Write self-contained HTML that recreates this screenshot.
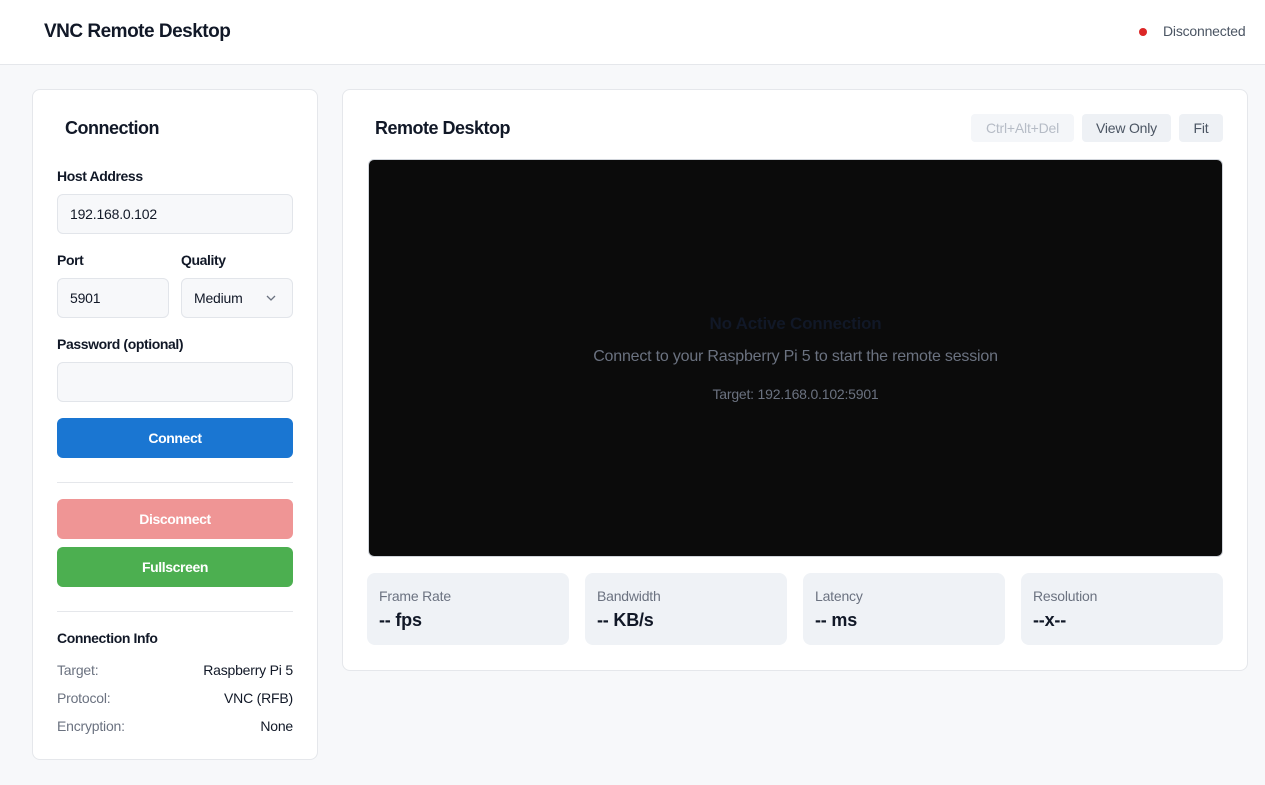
<!DOCTYPE html>
<html><head><style>
*{box-sizing:border-box;margin:0;padding:0}
body{width:1265px;height:785px;background:#f7f8fa;font-family:"Liberation Sans",sans-serif;color:#111827;position:relative;overflow:hidden;letter-spacing:-0.2px}
.hdr{position:absolute;left:0;top:0;width:1265px;height:65px;background:#fff;border-bottom:1px solid #e5e7eb}
.abs{position:absolute}
.card{position:absolute;background:#fff;border:1px solid #e5e7eb;border-radius:8px}
.lbl{position:absolute;font-size:14px;font-weight:bold;color:#111827;letter-spacing:-0.4px}
.inp{position:absolute;background:#f7f8fa;border:1px solid #e2e5ea;border-radius:6px;font-size:14px;padding-left:12px;line-height:38px;height:40px}
.btn{position:absolute;left:57px;width:236px;height:40px;border-radius:6px;color:#fff;font-size:14px;font-weight:bold;text-align:center;line-height:40px;letter-spacing:-0.4px}
.info{position:absolute;left:57px;width:236px;font-size:14px;color:#6b7280;display:flex;justify-content:space-between}
.info b{font-weight:normal;color:#111827}
.tb{position:absolute;top:114px;height:28px;border-radius:4px;background:#eef1f5;font-size:14px;color:#4b5563;line-height:28px;text-align:center}
.stat{position:absolute;top:573px;width:202px;height:72px;background:#eff2f6;border-radius:8px;padding:15px 12px}
.stat div{font-size:14px;color:#6b7280}
.stat p{font-size:18px;font-weight:bold;margin-top:6px}
</style></head><body>
<div class="hdr"></div>
<div class="abs" style="left:44px;top:21px;font-size:19px;font-weight:bold;letter-spacing:-0.5px">VNC Remote Desktop</div>
<div class="abs" style="left:1139px;top:28px;width:8px;height:8px;border-radius:50%;background:#dc2626"></div>
<div class="abs" style="left:1163px;top:23px;font-size:14px;color:#4b5563">Disconnected</div>

<div class="card" style="left:32px;top:89px;width:286px;height:671px"></div>
<div class="abs" style="left:65px;top:118px;font-size:18px;font-weight:bold;letter-spacing:-0.5px">Connection</div>
<div class="lbl" style="left:57px;top:168px">Host Address</div>
<div class="inp" style="left:57px;top:194px;width:236px">192.168.0.102</div>
<div class="lbl" style="left:57px;top:252px">Port</div>
<div class="lbl" style="left:181px;top:252px">Quality</div>
<div class="inp" style="left:57px;top:278px;width:112px">5901</div>
<div class="inp" style="left:181px;top:278px;width:112px">Medium<svg style="position:absolute;right:16px;top:16px" width="10" height="6" viewBox="0 0 10 6"><path d="M1 1l4 4 4-4" fill="none" stroke="#6b7280" stroke-width="1.3"/></svg></div>
<div class="lbl" style="left:57px;top:336px">Password (optional)</div>
<div class="inp" style="left:57px;top:362px;width:236px"></div>
<div class="btn" style="top:418px;background:#1a76d2">Connect</div>
<div class="abs" style="left:57px;top:482px;width:236px;height:1px;background:#e5e7eb"></div>
<div class="btn" style="top:499px;background:#ef9595">Disconnect</div>
<div class="btn" style="top:547px;background:#4caf50">Fullscreen</div>
<div class="abs" style="left:57px;top:611px;width:236px;height:1px;background:#e5e7eb"></div>
<div class="lbl" style="left:57px;top:630px">Connection Info</div>
<div class="info" style="top:662px"><span>Target:</span><b>Raspberry Pi 5</b></div>
<div class="info" style="top:690px"><span>Protocol:</span><b>VNC (RFB)</b></div>
<div class="info" style="top:718px"><span>Encryption:</span><b>None</b></div>

<div class="card" style="left:342px;top:89px;width:906px;height:582px"></div>
<div class="abs" style="left:375px;top:118px;font-size:18px;font-weight:bold;letter-spacing:-0.5px">Remote Desktop</div>
<div class="tb" style="left:971px;width:103px;background:#f4f6f9;color:#b6bcc6">Ctrl+Alt+Del</div>
<div class="tb" style="left:1082px;width:89px">View Only</div>
<div class="tb" style="left:1179px;width:44px">Fit</div>
<div class="abs" style="left:368px;top:159px;width:855px;height:398px;background:#0b0b0b;border:1px solid #d1d5db;border-radius:6px;text-align:center">
<div style="margin-top:154px;font-size:17px;font-weight:bold;color:#111827">No Active Connection</div>
<div style="margin-top:14px;font-size:16px;color:#6b7280">Connect to your Raspberry Pi 5 to start the remote session</div>
<div style="margin-top:20px;font-size:14px;color:#6b7280">Target: 192.168.0.102:5901</div>
</div>
<div class="stat" style="left:367px"><div>Frame Rate</div><p>-- fps</p></div>
<div class="stat" style="left:585px"><div>Bandwidth</div><p>-- KB/s</p></div>
<div class="stat" style="left:803px"><div>Latency</div><p>-- ms</p></div>
<div class="stat" style="left:1021px"><div>Resolution</div><p>--x--</p></div>
</body></html>
